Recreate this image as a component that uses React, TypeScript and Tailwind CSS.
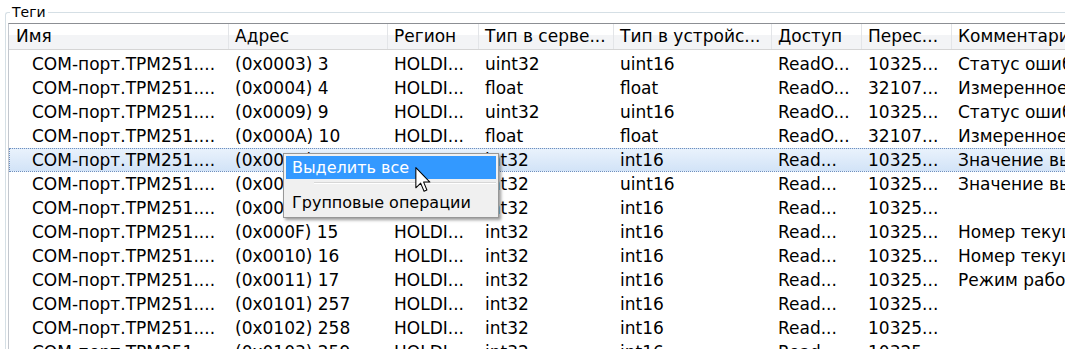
const columns = [
  { title: "Имя", w: "w-[220px]" },
  { title: "Адрес", w: "w-[159px]" },
  { title: "Регион", w: "w-[91px]" },
  { title: "Тип в серве...", w: "w-[135px]" },
  { title: "Тип в устройс...", w: "w-[158px]" },
  { title: "Доступ", w: "w-[90px]" },
  { title: "Перес...", w: "w-[90px]" },
  { title: "Комментари", w: "w-[200px]" },
];

const rows: string[][] = [
  ["(0x0003) 3", "HOLDI...", "uint32", "uint16", "ReadO...", "10325...", "Статус ошибки"],
  ["(0x0004) 4", "HOLDI...", "float", "float", "ReadO...", "32107...", "Измеренное значение"],
  ["(0x0009) 9", "HOLDI...", "uint32", "uint16", "ReadO...", "10325...", "Статус ошибки"],
  ["(0x000A) 10", "HOLDI...", "float", "float", "ReadO...", "32107...", "Измеренное значение"],
  ["(0x000B) 11", "HOLDI...", "int32", "int16", "Read...", "10325...", "Значение выхода"],
  ["(0x000C) 12", "HOLDI...", "int32", "uint16", "Read...", "10325...", "Значение выхода"],
  ["(0x000E) 14", "HOLDI...", "int32", "int16", "Read...", "10325...", ""],
  ["(0x000F) 15", "HOLDI...", "int32", "int16", "Read...", "10325...", "Номер текущего шага"],
  ["(0x0010) 16", "HOLDI...", "int32", "int16", "Read...", "10325...", "Номер текущего шага"],
  ["(0x0011) 17", "HOLDI...", "int32", "int16", "Read...", "10325...", "Режим работы"],
  ["(0x0101) 257", "HOLDI...", "int32", "int16", "Read...", "10325...", ""],
  ["(0x0102) 258", "HOLDI...", "int32", "int16", "Read...", "10325...", ""],
  ["(0x0103) 259", "HOLDI...", "int32", "int16", "Read...", "10325...", ""],
];

const SELECTED = 4;

function Cursor() {
  return (
    <svg width="16" height="26" viewBox="0 0 12 20" className="absolute left-[415px] top-[167px]">
      <path
        d="M0.5 0.5 L0.5 16 L4.2 12.4 L6.8 18.6 L9 17.7 L6.5 11.6 L11.3 11.6 Z"
        fill="#fff"
        stroke="#000"
        strokeWidth="0.8"
        strokeLinejoin="round"
      />
    </svg>
  );
}

function ContextMenu() {
  return (
    <div className="absolute left-[283px] top-[153px] w-[216px] border border-[#979797] bg-[#f0f0f0] p-[2px] shadow-[2px_2px_3px_rgba(0,0,0,0.4)]">
      <div className="h-[23px] bg-[#3399ff] pl-[6px] leading-[23px] text-white">Выделить все</div>
      <div className="flex h-[11px] pl-[28px] pt-[3px]">
        <div className="h-[2px] flex-1 border-t border-b border-t-[#d7d7d7] border-b-white" />
      </div>
      <div className="h-[25px] pl-[6px] leading-[25px] text-black">Групповые операции</div>
    </div>
  );
}

export default function App() {
  return (
    <div className="relative h-[349px] w-[1065px] overflow-hidden bg-white pt-[12px] font-['DejaVu_Sans',sans-serif] text-black">
      {/* group box "Теги" */}
      <div className="ml-[5px] w-[1200px] rounded-tl-[3px] border-l border-t border-[#d5dfe5] pl-[2px]">
        <div className="-mt-[10px] ml-[2px] w-fit bg-white px-[2px] text-[14px] leading-[18px]">Теги</div>
        <div className="mt-[2px] border-l border-t border-l-[#c3c7ce] border-t-[#8c8f94] text-[17px]">
          <div className="flex h-[26px] border-b border-[#d5d5d5] bg-[linear-gradient(#ffffff_0%,#ffffff_42%,#f3f4f6_43%,#f3f4f6_100%)]">
            {columns.map((c, i) => (
              <div
                key={i}
                className={`${c.w} shrink-0 overflow-hidden whitespace-nowrap border-r border-[#e3e5e8] leading-[25px] ${i === 0 ? "pl-[7px]" : "pl-[6px]"}`}
              >
                {c.title}
              </div>
            ))}
          </div>
          <div className="pt-[2px]">
            {rows.map((r, ri) => (
              <div
                key={ri}
                className={`flex h-[24px] leading-[22px] ${
                  ri === SELECTED
                    ? "border border-dotted border-[#6f8fbd] bg-[linear-gradient(#e9f2fc,#d2e3f7)]"
                    : "border border-transparent"
                }`}
              >
                <div className="w-[219px] shrink-0 overflow-hidden whitespace-nowrap pl-[22px]">COM-порт.TPM251....</div>
                {r.map((cell, ci) => (
                  <div
                    key={ci}
                    className={`${columns[ci + 1].w} shrink-0 overflow-hidden whitespace-nowrap pl-[6px]`}
                  >
                    {cell}
                  </div>
                ))}
              </div>
            ))}
          </div>
        </div>
      </div>
      <ContextMenu />
      <Cursor />
    </div>
  );
}
